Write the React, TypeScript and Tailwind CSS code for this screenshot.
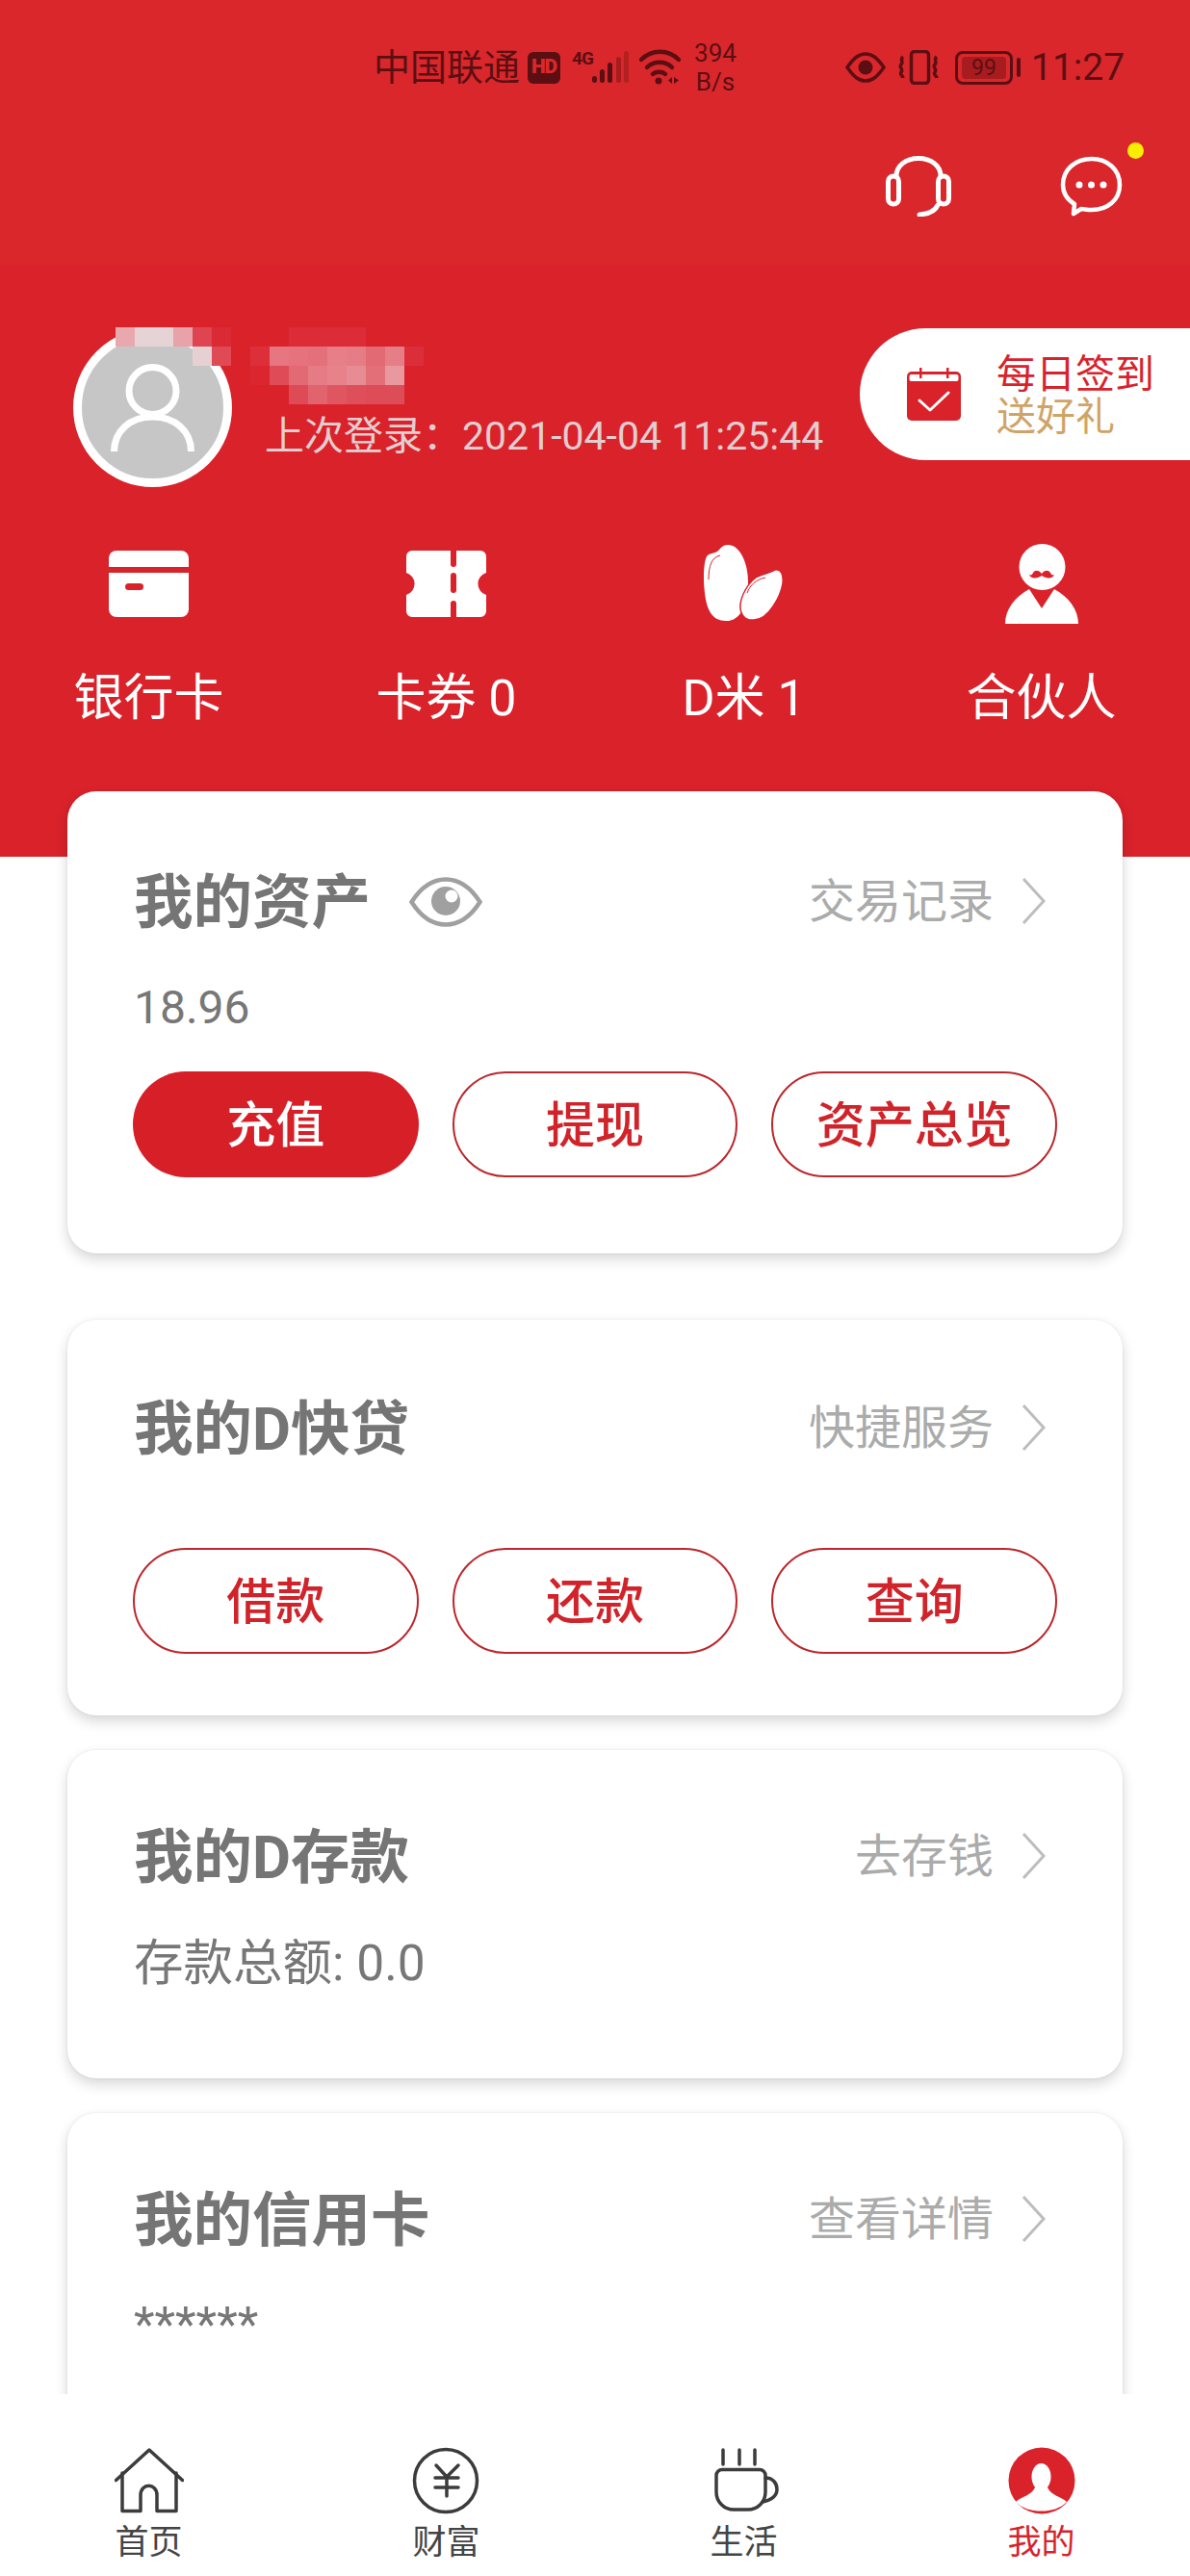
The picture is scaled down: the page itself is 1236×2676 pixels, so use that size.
const statusInk = "#5c0f12";

// pixelated user name, cells are 20px
const mosaic: [number, number, string][] = [
  [120, 340, "#e8a8ae"], [140, 340, "#e6d3d6"], [160, 340, "#e6d3d6"], [180, 340, "#e8a2a9"], [200, 340, "#df4550"], [220, 340, "#da2a35"],
  [300, 340, "#dc2c38"], [320, 340, "#dc2c38"], [340, 340, "#dc2c38"], [360, 340, "#dc2c38"],
  [200, 360, "#e6d0d3"], [220, 360, "#df4a54"], [260, 360, "#dc2f3a"], [280, 360, "#e67680"], [300, 360, "#e5727c"], [320, 360, "#e4707b"],
  [340, 360, "#e77f88"], [360, 360, "#e67c85"], [380, 360, "#e26a75"], [400, 360, "#e67e87"], [420, 360, "#dc2e3a"],
  [260, 380, "#db2630"], [280, 380, "#df4b56"], [300, 380, "#e26a74"], [320, 380, "#e57c85"], [340, 380, "#e7828b"], [360, 380, "#e88c94"], [380, 380, "#e36f79"], [400, 380, "#ea98a0"],
  [300, 400, "#de4a55"], [320, 400, "#e1636e"], [340, 400, "#df5661"], [360, 400, "#df4f5a"], [380, 400, "#dd4c57"], [400, 400, "#dd4d58"],
];

function StatusBar() {
  return (
    <div className="flex h-[140px] items-center pl-[388px] text-[#5c0f12]">
      <span className="w-[152px] whitespace-nowrap text-[38px] leading-none">中国联通</span>
      <span className="ml-2 flex h-[33px] w-[34px] items-center justify-center rounded-md bg-[#5c0f12] text-[21px] font-black tracking-tighter text-[#d8292c]">HD</span>
      <span className="mb-[20px] ml-3 w-[20px] text-[19px] font-bold leading-none tracking-tighter">4G</span>
      <svg width="40" height="36" viewBox="0 0 40 36" className="ml-px">
        <rect x="0" y="27" width="5" height="7" rx="2.5" fill={statusInk} />
        <rect x="8" y="20" width="5" height="14" rx="2.5" fill={statusInk} />
        <rect x="16" y="13" width="5" height="21" rx="2.5" fill={statusInk} />
        <rect x="25" y="7" width="5" height="27" rx="2.5" fill="#a81c1f" />
        <rect x="33" y="1" width="5" height="33" rx="2.5" fill="#b3201f" />
      </svg>
      <svg width="43" height="38" viewBox="0 0 43 38" className="ml-[9px]" fill="none" stroke={statusInk} strokeWidth="4.5" strokeLinecap="round">
        <path d="M2 11C13 0 30 0 41 11" />
        <path d="M8 19C15 12 27 12 34 19" />
        <path d="M14 26C17 23 24 23 27 26" />
        <circle cx="20" cy="33" r="3.5" fill={statusInk} stroke="none" />
        <path d="M34 29v7l-4-3.500zM36 29v7l5-3.500z" fill={statusInk} stroke="none" />
      </svg>
      <span className="ml-[14px] flex w-[44px] flex-col items-center text-[26px] leading-[30px]">
        <span>394</span>
        <span>B/s</span>
      </span>
      <svg width="42" height="32" viewBox="0 0 42 32" className="ml-[113px]" fill="none" stroke={statusInk}>
        <path d="M2 16C9 6 14 2 21 2C28 2 33 6 40 16C33 26 28 30 21 30C14 30 9 26 2 16Z" strokeWidth="3.5" />
        <circle cx="21" cy="16" r="7.500" fill={statusInk} stroke="none" />
      </svg>
      <svg width="45" height="36" viewBox="0 0 45 36" className="ml-[13px]" fill="none" stroke={statusInk} strokeWidth="3.500">
        <rect x="13.500" y="1.500" width="18" height="33" rx="3.500" />
        <path d="M5 7C1 10 6 12 3 15C0 18 6 20 3 23C1 25 5 27 5 29" />
        <path d="M40 7C36 10 41 12 38 15C35 18 41 20 38 23C36 25 40 27 40 29" />
      </svg>
      <span className="relative ml-[14px] flex h-[35px] w-[60px] items-center justify-center rounded-lg border-[3px] border-[#5c0f12]">
        <span className="flex h-[23px] w-[46px] items-center justify-center rounded-sm bg-[#a81c1f] text-[23px] leading-none">99</span>
      </span>
      <span className="ml-[4px] h-[20px] w-[4px] rounded-sm bg-[#5c0f12]" />
      <span className="ml-[11px] text-[39px] leading-none">11:27</span>
    </div>
  );
}

function Headset() {
  return (
    <svg width="68" height="63" viewBox="0 0 68 63" fill="none" stroke="#fff" strokeWidth="5" strokeLinecap="round">
      <path d="M11 21C11 10 21 2.500 34 2.500C47 2.500 57 10 57 21" />
      <rect x="2.500" y="21" width="11" height="29" rx="5.500" />
      <rect x="54.500" y="21" width="11" height="29" rx="5.500" />
      <path d="M54 51C52 56 46 60 35 61" />
    </svg>
  );
}

function Message() {
  return (
    <svg width="65" height="63" viewBox="0 0 65 63" fill="none" stroke="#fff" strokeWidth="4.500" strokeLinejoin="round">
      <path d="M14 60L15 50C7 45 3 38 3 30C3 14 16 3 33 3C49 3 62 14 62 30C62 46 49 56 33 56C28 56 25 55 22 55Z" />
      <circle cx="20" cy="30" r="3.500" fill="#fff" stroke="none" />
      <circle cx="32.500" cy="30" r="3.500" fill="#fff" stroke="none" />
      <circle cx="45" cy="30" r="3.500" fill="#fff" stroke="none" />
    </svg>
  );
}

function AvatarIcon() {
  return (
    <div className="flex h-[165px] w-[165px] shrink-0 items-center justify-center rounded-full border-[9px] border-white bg-[#c6c6c6]">
      <svg width="87" height="91" viewBox="0 0 87 91" fill="none" stroke="#fff" strokeWidth="7">
        <circle cx="43.500" cy="28" r="24.500" />
        <path d="M3.500 91C3.500 70 20 55 43.500 55C67 55 83.500 70 83.500 91" />
      </svg>
    </div>
  );
}

function Calendar() {
  return (
    <svg width="56" height="55" viewBox="0 0 56 55">
      <rect x="0" y="4" width="56" height="51" rx="5" fill="#da222b" />
      <rect x="2.500" y="7" width="51" height="7" rx="2" fill="#fff" />
      <rect x="13" y="0" width="2.500" height="11" fill="#da222b" />
      <rect x="41" y="0" width="2.500" height="11" fill="#da222b" />
      <path d="M13 34L24 44L43 26" fill="none" stroke="#fff" strokeWidth="3" strokeLinecap="round" strokeLinejoin="round" />
    </svg>
  );
}

function BankCard() {
  return (
    <svg width="83" height="69" viewBox="0 0 83 69" fill="#fff">
      <path d="M8 0H75A8 8 0 0 1 83 8V17H0V8A8 8 0 0 1 8 0Z" />
      <path d="M0 23H83V61A8 8 0 0 1 75 69H8A8 8 0 0 1 0 61Z" />
      <rect x="17" y="34" width="19" height="7" rx="3.500" fill="#da222b" />
    </svg>
  );
}

function Ticket() {
  return (
    <svg width="83" height="69" viewBox="0 0 83 69">
      <path d="M6 0H77A6 6 0 0 1 83 6V23A12 12 0 0 0 83 46V63A6 6 0 0 1 77 69H6A6 6 0 0 1 0 63V46A12 12 0 0 0 0 23V6A6 6 0 0 1 6 0Z" fill="#fff" />
      <rect x="46" y="-4" width="6" height="21" rx="3" fill="#da222b" />
      <rect x="46" y="23" width="6" height="21" rx="3" fill="#da222b" />
      <rect x="46" y="52" width="6" height="21" rx="3" fill="#da222b" />
    </svg>
  );
}

function Rice() {
  return (
    <svg width="83" height="80" viewBox="0 0 83 80">
      <path d="M25 0C38 0 46 20 46 38C46 55 42 79 23 79C9 79 3 68 1 50C-1 35 0 18 3 12C6 8 12 9 15 6C18 3 20 0 25 0Z" fill="#fff" />
      <path d="M17 11C8 13 5 22 5 36" fill="none" stroke="#da222b" strokeWidth="1" />
      <path d="M74 26C80 25 83 30 82 40C80 52 68 78 52 78C43 79 37 72 38 62C39 52 46 40 54 34C60 30 68 30 74 26Z" fill="#fff" stroke="#da222b" strokeWidth="1.500" />
      <path d="M64 34C54 36 48 42 45 50" fill="none" stroke="#da222b" strokeWidth="1" />
    </svg>
  );
}

function Partner() {
  return (
    <svg width="76" height="83" viewBox="0 0 76 83">
      <circle cx="38.500" cy="24" r="24" fill="#fff" />
      <path d="M38 31C35 27 31 27 29 30C28 33 25 33 25 31C25 36 33 37 38 33C43 37 51 36 51 31C51 33 48 33 47 30C45 27 41 27 38 31Z" fill="#da222b" />
      <path d="M0 83C0 68 10 55 25 47L38 67L51 47C66 55 76 68 76 83Z" fill="#fff" />
    </svg>
  );
}

function Chevron() {
  return (
    <svg width="25" height="48" viewBox="0 0 25 48" fill="none" stroke="#bdbdbd" strokeWidth="3" className="mb-[3px] ml-[29px]">
      <path d="M2 1L23 24L2 47" />
    </svg>
  );
}

function EyeIcon() {
  return (
    <svg width="76" height="52" viewBox="0 0 76 52" className="ml-[40px]">
      <path d="M2.500 26C14 8 26 2.500 38 2.500C50 2.500 62 8 73.500 26C62 44 50 49.500 38 49.500C26 49.500 14 44 2.500 26Z" fill="none" stroke="#a0a0a0" strokeWidth="4.500" />
      <circle cx="38" cy="25" r="15" fill="#a0a0a0" />
      <circle cx="44" cy="20" r="6.500" fill="#fff" />
    </svg>
  );
}

function CardHeader({ title, action, eye }: { title: string; action: string; eye?: boolean }) {
  return (
    <div className="flex h-[70px] items-center pl-[69px] pr-[80px]">
      <h2 className="pt-[3px] text-[61.5px] font-bold leading-none text-[#757575]">{title}</h2>
      {eye && <EyeIcon />}
      <span className="ml-auto text-[48px] leading-none text-[#ababab]">{action}</span>
      <Chevron />
    </div>
  );
}

function ActionButtons({ labels, solidFirst }: { labels: string[]; solidFirst?: boolean }) {
  return (
    <div className="flex gap-[35px] px-[68px]">
      {labels.map((label, index) => (
        <button
          key={label}
          className={
            solidFirst && index === 0
              ? "flex h-[110px] w-[298px] items-center justify-center rounded-full bg-[#d71f28] pt-[4px] text-[51px] font-medium text-white"
              : "flex h-[110px] w-[298px] items-center justify-center rounded-full border-2 border-[#bb272c] bg-white pt-[4px] text-[51px] font-medium text-[#d0232a]"
          }
        >
          {label}
        </button>
      ))}
    </div>
  );
}

const cardBox = "mx-[70px] rounded-[30px] bg-white shadow-[0_6px_14px_rgba(0,0,0,0.16),0_0_3px_rgba(0,0,0,0.08)]";

function NavHome() {
  return (
    <svg width="72" height="68" viewBox="0 0 72 68" fill="none" stroke="#3c3c3c" strokeWidth="3.500" strokeLinecap="round" strokeLinejoin="round">
      <path d="M1.500 33.500L36 2L70.500 33.500" />
      <path d="M8 26V65.500H27V49C27 36 44 36 44 49V65.500H64V26" />
    </svg>
  );
}

function NavCoin() {
  return (
    <svg width="70" height="70" viewBox="0 0 70 70" fill="none" stroke="#3c3c3c" strokeWidth="3.500" strokeLinecap="round" className="mr-[2px]">
      <circle cx="35" cy="35" r="32.500" />
      <path d="M25 19L36 31L48 19M24 32H48M24 42H48M36 31V51" />
    </svg>
  );
}

function NavCup() {
  return (
    <svg width="68" height="68" viewBox="0 0 68 68" fill="none" stroke="#3c3c3c" strokeWidth="3.500" strokeLinecap="round" className="ml-[6px]">
      <path d="M9 2V17M26 2V17M42 2V17" />
      <path d="M8 22.500H47A6 6 0 0 1 53 28.500V46A18 18 0 0 1 35 64H20A18 18 0 0 1 2 46V28.500A6 6 0 0 1 8 22.500Z" />
      <path d="M53 31C61 31 65 37 65 43C65 50 59 54 50 56" />
    </svg>
  );
}

function NavMine() {
  return (
    <svg width="70" height="70" viewBox="0 0 70 70">
      <circle cx="35" cy="35" r="34.500" fill="#da222b" />
      <ellipse cx="34.500" cy="31" rx="10" ry="14" fill="#fff" />
      <path d="M8 57C14 51 24 51 28 42H41C45 51 55 51 61 57C54 64 45 66.500 34.500 66.500C24 66.500 15 64 8 57Z" fill="#fff" />
    </svg>
  );
}

const tabs = [
  { label: "首页", icon: <NavHome /> },
  { label: "财富", icon: <NavCoin /> },
  { label: "生活", icon: <NavCup /> },
  { label: "我的", icon: <NavMine />, active: true },
];

const shortcuts = [
  { label: "银行卡", icon: <BankCard /> },
  { label: "卡券 0", icon: <Ticket /> },
  { label: "D米 1", icon: <Rice /> },
  { label: "合伙人", icon: <Partner /> },
];

export default function App() {
  return (
    <div className="flex h-[2676px] w-[1236px] flex-col overflow-hidden bg-white font-['Roboto','Noto_Sans_CJK_SC',sans-serif]">
      <main className="min-h-0 flex-1 overflow-hidden">
        <header className="relative h-[890px] bg-[#da222b]">
          <div className="h-[275px] bg-[#d9272c]">
            <StatusBar />
            <div className="flex items-start pl-[920px] pt-[22px]">
              <Headset />
              <span className="relative ml-[113px]">
                <Message />
                <span className="absolute -top-[14px] left-[70px] h-[17px] w-[17px] rounded-full bg-[#f7ee00]" />
              </span>
            </div>
          </div>

          <div className="flex h-[230px] items-start pl-[76px] pt-[66px]">
            <AvatarIcon />
            <p className="ml-[34px] mt-[88px] whitespace-nowrap text-[41px] leading-[48px] text-[#e2cdd0]">上次登录：2021-04-04 11:25:44</p>
            <div className="ml-auto flex h-[137px] w-[343px] items-center rounded-l-[69px] bg-white pl-[49px]">
              <Calendar />
              <div className="ml-[37px] mt-[3px] text-[41px] leading-[44px]">
                <p className="text-[#d7232c]">每日签到</p>
                <p className="text-[#cfa468]">送好礼</p>
              </div>
            </div>
          </div>

          <svg width="320" height="90" viewBox="120 340 320 90" className="absolute left-[120px] top-[340px]">
            {mosaic.map(([x, y, fill]) => (
              <rect key={`${x}-${y}`} x={x} y={y} width="20" height="20" fill={fill} />
            ))}
          </svg>

          <div className="mt-[59px] grid grid-cols-4">
            {shortcuts.map((item) => (
              <div key={item.label} className="flex flex-col items-center">
                <div className="flex h-[84px] items-center justify-center">{item.icon}</div>
                <span className="mt-[48px] text-[52px] leading-[60px] text-white">{item.label}</span>
              </div>
            ))}
          </div>
        </header>

        <div className="relative -mt-[68px]">
          <section className={`${cardBox} h-[480px] pt-[80px]`}>
            <CardHeader title="我的资产" action="交易记录" eye />
            <p className="ml-[69px] mt-[45px] text-[48px] leading-[60px] text-[#777]">18.96</p>
            <div className="mt-[36px]">
              <ActionButtons labels={["充值", "提现", "资产总览"]} solidFirst />
            </div>
          </section>

          <section className={`${cardBox} mt-[69px] h-[411px] pt-[78px]`}>
            <CardHeader title="我的D快贷" action="快捷服务" />
            <div className="mt-[89px]">
              <ActionButtons labels={["借款", "还款", "查询"]} />
            </div>
          </section>

          <section className={`${cardBox} mt-[36px] h-[341px] pt-[76px]`}>
            <CardHeader title="我的D存款" action="去存钱" />
            <p className="ml-[69px] mt-[46px] text-[51.5px] leading-[60px] text-[#777]">存款总额: 0.0</p>
          </section>

          <section className={`${cardBox} mt-[36px] h-[400px] pt-[76px]`}>
            <CardHeader title="我的信用卡" action="查看详情" />
            <p className="ml-[69px] mt-[44px] text-[50px] leading-[60px] text-[#777]">******</p>
          </section>
        </div>
      </main>

      <nav className="relative grid h-[189px] grid-cols-4 bg-white pt-[55px]">
        {tabs.map((tab) => (
          <div key={tab.label} className="flex flex-col items-center">
            <div className="flex h-[70px] items-center justify-center">{tab.icon}</div>
            <span className={tab.active ? "mt-[10px] text-[35px] leading-[40px] text-[#d7232c]" : "mt-[10px] text-[35px] leading-[40px] text-[#444]"}>
              {tab.label}
            </span>
          </div>
        ))}
      </nav>
    </div>
  );
}
